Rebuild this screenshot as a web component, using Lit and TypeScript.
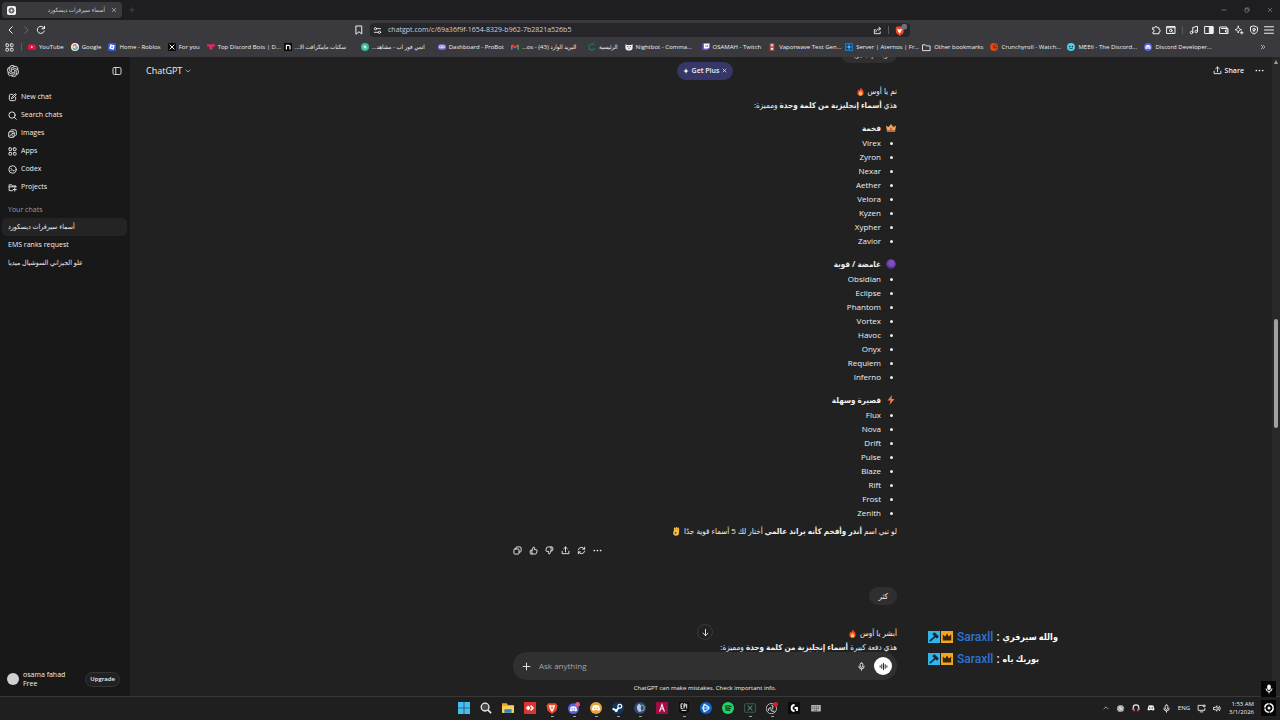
import { LitElement, html, css, svg, TemplateResult, SVGTemplateResult } from "lit";
import { customElement, state } from "lit/decorators.js";
import { classMap } from "lit/directives/class-map.js";

/* Line icons share a 20 by 20 grid and take the text colour. */
const glyphs: Record<string, SVGTemplateResult> = {
  back: svg`<path d="M12.5 3.500 6 10l6.500 6.500" />`,
  forward: svg`<path d="M7.500 3.500 14 10l-6.500 6.500" />`,
  reload: svg`<path d="M16.500 12.500A7.200 7.200 0 1 1 16 6" /><path d="M17 2.500v5h-5" />`,
  bookmark: svg`<path d="M4.500 2h11v16L10 13.500 4.500 18z" />`,
  tune: svg`<circle cx="5.500" cy="6" r="2.500" /><path d="M8 6h9M3 14h9" /><circle cx="14.500" cy="14" r="2.500" />`,
  shareBox: svg`<path d="M5 8H3v9h13v-4M6.500 13c.5-5 4-7 10-7M13 2.500 17 6l-4 3.500" />`,
  puzzle: svg`<path d="M4 5.500h3.500a2.500 2.500 0 1 1 5 0H16v3.500a2.500 2.500 0 0 1 0 5v3.500H4V14a2.500 2.500 0 0 0 0-5z" />`,
  searchTab: svg`<path d="M2 3h16v14H2zM2 5.500h16" /><circle cx="9.500" cy="11" r="2.500" /><path d="m11.500 13 2 2" />`,
  music: svg`<path d="M7.500 15V5l9.500-2.500v10" /><circle cx="5" cy="15" r="2.500" /><circle cx="14.500" cy="13" r="2.500" />`,
  sidePanel: svg`<path d="M2 3h16v14H2z" /><path fill="currentColor" d="M11.500 3H18v14h-6.500z" />`,
  wallet: svg`<path d="M2 4h13.500v3H18v10H2zM15.500 7H5M17.500 10H13v4h4.500" />`,
  sparkle: svg`<path d="M8.500 2.500c.7 4.500 2 6 6.500 6.800-4.500.8-5.800 2.200-6.500 6.700C7.700 11.500 6.500 10.100 2 9.300c4.500-.8 5.700-2.300 6.500-6.800zM15.500 13v5M13 15.500h5" />`,
  star: svg`<path fill="currentColor" stroke="none" d="M10 0c1 6.500 3.500 9 10 10-6.500 1-9 3.500-10 10-1-6.500-3.500-9-10-10 6.500-1 9-3.500 10-10z" />`,
  shield: svg`<path d="M10 2 17 4.500V10c0 4-3 6.500-7 8-4-1.500-7-4-7-8V4.500z" /><circle cx="10" cy="9" r="2.500" /><path d="M10 11v3" />`,
  menu: svg`<path d="M1 3.500h18M1 10h18M1 16.500h18" />`,
  grid: svg`<rect x="2" y="2" width="6" height="6" rx="1.500" /><rect x="12" y="2" width="6" height="6" rx="1.500" /><rect x="2" y="12" width="6" height="6" rx="1.500" /><rect x="12" y="12" width="6" height="6" rx="1.500" />`,
  folder: svg`<path d="M2 4h5.500l2 2.500H18V17H2z" />`,
  more: svg`<path d="m4 4 6 6-6 6M10.500 4l6 6-6 6" />`,
  close: svg`<path d="m4 4 12 12M16 4 4 16" />`,
  plus: svg`<path d="M10 2.500v15M2.500 10h15" />`,
  minus: svg`<path d="M3 10h14" />`,
  restore: svg`<rect x="3" y="6" width="11" height="11" rx="2" /><path d="M7 3h8a2 2 0 0 1 2 2v8" />`,
  logo: svg`<path transform="scale(.833)" fill="currentColor" stroke="currentColor" stroke-width=".5" d="M22.2819 9.8211a5.9847 5.9847 0 0 0-.5157-4.9108 6.0462 6.0462 0 0 0-6.5098-2.9A6.0651 6.0651 0 0 0 4.9807 4.1818a5.9847 5.9847 0 0 0-3.9977 2.9 6.0462 6.0462 0 0 0 .7427 7.0966 5.98 5.98 0 0 0 .511 4.9107 6.051 6.051 0 0 0 6.5146 2.9001A5.9847 5.9847 0 0 0 13.2599 24a6.0557 6.0557 0 0 0 5.7718-4.2058 5.9894 5.9894 0 0 0 3.9977-2.9001 6.0557 6.0557 0 0 0-.7475-7.0729zm-9.022 12.6081a4.4755 4.4755 0 0 1-2.8764-1.0408l.1419-.0804 4.7783-2.7582a.7948.7948 0 0 0 .3927-.6813v-6.7369l2.02 1.1686a.071.071 0 0 1 .038.052v5.5826a4.504 4.504 0 0 1-4.4945 4.4944zm-9.6607-4.1254a4.4708 4.4708 0 0 1-.5346-3.0137l.142.0852 4.783 2.7582a.7712.7712 0 0 0 .7806 0l5.8428-3.3685v2.3324a.0804.0804 0 0 1-.0332.0615L9.74 19.9502a4.4992 4.4992 0 0 1-6.1408-1.6464zM2.3408 7.8956a4.485 4.485 0 0 1 2.3655-1.9728V11.6a.7664.7664 0 0 0 .3879.6765l5.8144 3.3543-2.0201 1.1685a.0757.0757 0 0 1-.071 0l-4.8303-2.7865A4.504 4.504 0 0 1 2.3408 7.872zm16.5963 3.8558L13.1038 8.364 15.1192 7.2a.0757.0757 0 0 1 .071 0l4.8303 2.7913a4.4944 4.4944 0 0 1-.6765 8.1042v-5.6772a.79.79 0 0 0-.407-.667zm2.0107-3.0231l-.142-.0852-4.7735-2.7818a.7759.7759 0 0 0-.7854 0L9.409 9.2297V6.8974a.0662.0662 0 0 1 .0284-.0615l4.8303-2.7866a4.4992 4.4992 0 0 1 6.6802 4.66zM8.3065 12.863l-2.02-1.1638a.0804.0804 0 0 1-.038-.0567V6.0742a4.4992 4.4992 0 0 1 7.3757-3.4537l-.142.0805L8.704 5.459a.7948.7948 0 0 0-.3927.6813zm1.0976-2.3654l2.602-1.4998 2.6069 1.4998v2.9994l-2.5974 1.4997-2.6067-1.4997Z" />`,
  panel: svg`<rect x="2" y="3" width="16" height="14" rx="2.500" /><path d="M7.500 3v14" />`,
  chevron: svg`<path d="m3 7 7 6 7-6" />`,
  chevronUp: svg`<path d="m3 13 7-7 7 7" />`,
  compose: svg`<path d="M10.500 3H6a3 3 0 0 0-3 3v8a3 3 0 0 0 3 3h8a3 3 0 0 0 3-3V9.500" /><path d="m8 12 .5-2.800L15.500 2.300a1.500 1.500 0 0 1 2.200 2.200l-7 7z" />`,
  search: svg`<circle cx="9" cy="9" r="7" /><path d="m14 14 4.500 4.500" />`,
  images: svg`<rect x="1.500" y="6" width="12.500" height="12.500" rx="2.500" /><path d="M6 3 7 2h8.500a3 3 0 0 1 3 3v8L17 14.500M3 16l4-4 5 5" /><circle cx="10" cy="10" r="1" />`,
  codex: svg`<circle cx="10" cy="10" r="8.200" /><path d="m6.500 7.500 2 2.500-2 2.500M11 12.500h3" />`,
  projects: svg`<path d="M17.500 9V6.500h-8L8 4H2.500v13H10M2.500 8.500h15M15 11v7M11.500 14.500h7" />`,
  upload: svg`<path d="M10 13V2.500M6 6l4-3.800L14 6M2.500 11.500V17h15v-5.500" />`,
  dots: svg`<g fill="currentColor" stroke="none"><circle cx="3" cy="10" r="1.900" /><circle cx="10" cy="10" r="1.900" /><circle cx="17" cy="10" r="1.900" /></g>`,
  copy: svg`<rect x="2" y="6.500" width="11.500" height="11.500" rx="2.500" /><path d="M6.500 6.500V4.500a2.500 2.500 0 0 1 2.500-2.500h6.500A2.500 2.500 0 0 1 18 4.500V11a2.500 2.500 0 0 1-2.500 2.500h-2" />`,
  like: svg`<path d="M6.500 9 10 2.200c2 0 2.800 1.300 2.400 3L11.800 8h4.200c1.500 0 2.300 1.200 2 2.500l-1.300 5.300A2.500 2.500 0 0 1 14.300 17.800H4.500A1.800 1.800 0 0 1 2.700 16v-5.200A1.800 1.800 0 0 1 4.500 9zM6.500 9v8.800" />`,
  regenerate: svg`<path d="M3 8.500A7.200 7.200 0 0 1 16.500 7M17 2.500V7h-4.500M17 11.500A7.200 7.200 0 0 1 3.500 13M3 17.500V13h4.500" />`,
  down: svg`<path d="M10 3v14M4.500 11.500 10 17l5.500-5.500" />`,
  mic: svg`<rect x="7" y="2" width="6" height="10" rx="3" /><path d="M4 9.500a6 6 0 0 0 12 0M10 15.500v3" />`,
  wave: svg`<path d="M2.500 8.500v3M6.200 6v8M10 3v14M13.800 6v8M17.500 8.500v3" />`,
  monitor: svg`<path d="M12 3H2.500v11h15V10M7 17.500h6M14.500 2.500h3.500v3.500h-3.500z" />`,
  speaker: svg`<path d="M2 7.500h3L9 4v12l-4-3.500H2zM12 7.500a4 4 0 0 1 0 5M14.500 5a8 8 0 0 1 0 10" />`,
};

const icon = (name: string, size = "s9", extra = "") =>
  html`<svg class="ic ${size} ${extra}" viewBox="0 0 20 20" aria-hidden="true">${glyphs[name]}</svg>`;

/* Filled pictures: site icons, application icons and emoji. */
const pictures: Record<string, SVGTemplateResult> = {
  youtube: svg`<rect y="3" width="20" height="14" rx="4" fill="#e8123c" /><path d="M8 7v6l5-3z" fill="#fff" />`,
  google: svg`<circle cx="10" cy="10" r="10" fill="#eee" /><g fill="none" stroke-width="3"><path d="M14 6a5.500 5.500 0 0 0-8.500 1.200" stroke="#e64235" /><path d="M5.500 7.200a5.500 5.500 0 0 0 0 5.600" stroke="#f8ba05" /><path d="M5.500 12.800a5.500 5.500 0 0 0 8.500 1.500" stroke="#34a553" /><path d="M14 14.300a5.500 5.500 0 0 0 1.500-4.300H10" stroke="#4286f5" /></g>`,
  roblox: svg`<rect width="20" height="20" rx="4" fill="#3457e6" /><path fill="#fff" fill-rule="evenodd" d="m6 3 11 3-3 11L3 14zm2.500 5-.8 3.500 3.800 1 .9-3.700z" />`,
  x: svg`<rect width="20" height="20" rx="2" fill="#0a0a0a" /><path d="m4 4 12 12M16 4 4 16" stroke="#eee" stroke-width="2.500" />`,
  topgg: svg`<path d="M0 3h20v6h-6v4l-4 5-4-5V9H0z" fill="#e5295f" />`,
  nfont: svg`<rect width="20" height="20" fill="#070707" /><path d="M6 16V6h6q3 0 3 3v7" fill="none" stroke="#fff" stroke-width="3" />`,
  teal: svg`<circle cx="10" cy="10" r="10" fill="#35bd9d" /><path d="M5 10h10M10 5v10M7 7l6 6" stroke="#eafff9" stroke-width="2" />`,
  probot: svg`<rect y="3" width="20" height="14" rx="6" fill="#7d73d8" /><rect x="3" y="6" width="14" height="7" rx="3" fill="#e7e5ff" /><circle cx="7" cy="9.500" r="1.500" fill="#4438a0" /><circle cx="13" cy="9.500" r="1.500" fill="#4438a0" />`,
  gmail: svg`<path d="M2 17V5" stroke="#4285f4" stroke-width="4" /><path d="M18 17V5" stroke="#34a853" stroke-width="4" /><path d="m2 5 8 6 8-6" fill="none" stroke="#ea4335" stroke-width="4" />`,
  ring: svg`<path d="M15 4.500A7.500 7.500 0 1 0 17 12" fill="none" stroke="#117b70" stroke-width="3" />`,
  nightbot: svg`<path d="M1 3l4 2h10l4-2v9a9 7 0 0 1-18 0z" fill="#f1f1f1" /><path d="M5 9h3M12 9h3M8 13h4" stroke="#444" stroke-width="2" />`,
  twitch: svg`<path d="M3 0h17v12l-5 5h-4l-3 3v-3H1V4z" fill="#9248f2" /><path d="M5 2h13v9l-3 3H5z" fill="#fff" /><path d="M10 5v5M14 5v5" stroke="#9248f2" stroke-width="2" />`,
  vapor: svg`<rect x="4" width="12" height="20" rx="2" fill="#a94a3a" /><path d="M7 3h6v5H7z" fill="#e8d8c8" /><path d="M7 12h6v5H7z" fill="#eee" />`,
  aternos: svg`<rect width="20" height="20" fill="#1a79bd" /><path d="M3 3h5v5H3zM12 3h5v5h-5zM3 12h5v5H3zM12 12h5v5h-5z" fill="#123e62" /><circle cx="10" cy="10" r="3" fill="#53b2ea" />`,
  crunchy: svg`<circle cx="10" cy="10" r="10" fill="#df4b12" /><circle cx="13" cy="9" r="5" fill="#3a2a28" /><circle cx="14" cy="8" r="3" fill="#df4b12" />`,
  mee6: svg`<circle cx="10" cy="10" r="10" fill="#4fd0e6" /><circle cx="6.500" cy="9" r="2" fill="#17404f" /><circle cx="13.500" cy="9" r="2" fill="#17404f" /><path d="M6 14h8" stroke="#17404f" stroke-width="2" />`,
  discord: svg`<circle cx="10" cy="10" r="10" fill="#5a5fe8" /><path d="M5 6q5-2 10 0l2 7-3 2-1.500-1.500h-5L6 15l-3-2z" fill="#fff" /><circle cx="7.800" cy="10.500" r="1.300" fill="#5a5fe8" /><circle cx="12.200" cy="10.500" r="1.300" fill="#5a5fe8" />`,
  discordGold: svg`<circle cx="10" cy="10" r="10" fill="#e6a541" /><path d="M5 6q5-2 10 0l2 7-3 2-1.500-1.500h-5L6 15l-3-2z" fill="#fff" /><circle cx="7.800" cy="10.500" r="1.300" fill="#e6a541" /><circle cx="12.200" cy="10.500" r="1.300" fill="#e6a541" />`,
  discordAlert: svg`<circle cx="9" cy="11" r="9" fill="#5a5fe8" /><path d="M4.500 8q4.500-2 9 0l2 6-3 2-1.500-1.500H7.500L6 16l-3-2z" fill="#fff" /><circle cx="7" cy="11.500" r="1.200" fill="#5a5fe8" /><circle cx="11" cy="11.500" r="1.200" fill="#5a5fe8" /><circle cx="16" cy="4" r="4" fill="#ec5a78" />`,
  favicon: svg`<rect width="20" height="20" rx="4" fill="#f2f2f2" /><circle cx="10" cy="10" r="5.500" fill="none" stroke="#333" stroke-width="2" /><path d="m7 8 3-1.500L13 8v4l-3 1.500L7 12z" fill="none" stroke="#333" stroke-width="1.500" />`,
  braveLion: svg`<path d="M4 2h12l3 4-1.500 8L10 20l-7.500-6L1 6z" fill="#f04a25" /><path d="m5 5 5 1 5-1-1 5-4 7-4-7z" fill="#fff" /><path d="m8 8 2 5 2-5z" fill="#f04a25" />`,
  braveBadge: svg`<path d="M3 4h9l3 3-1 8-6 5-6-5L1 7z" fill="#f04a25" /><path d="m4 8 4 1 4-1-2 4-2 4-3-3z" fill="#fff" /><rect x="11" width="9" height="9" rx="3" fill="#6e7080" />`,
  windows: svg`<path d="M0 0h9.500v9.500H0zM10.500 0H20v9.500h-9.500zM0 10.500h9.500V20H0zM10.500 10.500H20V20h-9.500z" fill="#45bff2" />`,
  find: svg`<circle cx="8.500" cy="8.500" r="6.500" fill="#4a4a4a" stroke="#eee" stroke-width="2.200" /><path d="m13.500 13.500 5 5" stroke="#eee" stroke-width="2.600" />`,
  files: svg`<path d="M0 2h8l2 3h10v13H0z" fill="#e9a82a" /><path d="M0 7h20v11H0z" fill="#fad25a" /><path d="M4 12h12v6H4z" fill="#2f84c8" />`,
  anydesk: svg`<rect width="20" height="20" rx="1" fill="#dc3434" /><path d="m3 10 4-4 4 4-4 4z" fill="#fff" /><path d="m11 6 4 4-4 4" fill="none" stroke="#fff" stroke-width="2.500" />`,
  steam: svg`<circle cx="10" cy="10" r="10" fill="#12365e" /><path d="m1 11 6 3 5-5" stroke="#fff" stroke-width="3" fill="none" /><circle cx="13" cy="7" r="3.200" fill="#12365e" stroke="#fff" stroke-width="2" /><circle cx="7" cy="14" r="2.500" fill="#fff" />`,
  blueOrb: svg`<circle cx="10" cy="10" r="10" fill="#2c4a70" /><path d="M8 3a5 5 0 0 1 3 8 4 4 0 0 1-1 6 8 8 0 0 1-2-14z" fill="#b9c7d8" /><path d="M12 5a5 5 0 0 1 0 10" stroke="#7e9abc" stroke-width="2" fill="none" />`,
  alight: svg`<rect width="20" height="20" rx="2" fill="#a60a44" /><path d="m6 16 4-12 4 12M9 12l3-1" fill="none" stroke="#fff" stroke-width="1.800" />`,
  epic: svg`<path d="M2 0h16v16l-8 4-8-4z" fill="#0b0b0b" /><path d="M5 3v8M5 3h3M5 7h2M5 11h3M10 11V3h2v4h-2M14.500 3v8M6 14h8" stroke="#fff" stroke-width="1.500" fill="none" />`,
  battle: svg`<circle cx="10" cy="10" r="10" fill="#0c64ce" /><path d="M7 4q8 4 8 6t-8 6q-3-6 0-12zM3 10h12" fill="none" stroke="#e3f3ff" stroke-width="2" />`,
  spotify: svg`<circle cx="10" cy="10" r="10" fill="#1fd760" /><path d="M4.500 7q6-2 11.500 1M5 10.300q5-1.500 9.500 1M6 13.500q4-1 7.500.8" fill="none" stroke="#123" stroke-width="1.900" />`,
  screenX: svg`<rect x="1" y="3" width="18" height="14" rx="1" fill="#16211f" stroke="#47635d" stroke-width="1.500" /><path d="m6 6 8 8M14 6l-8 8" stroke="#567a72" stroke-width="2" />`,
  obs: svg`<circle cx="9" cy="11" r="8.500" fill="#1c1c1e" stroke="#c9c9c9" stroke-width="1.500" /><path d="M9 5a4 4 0 0 1 1 7M4 15a4 4 0 0 1 5-5M14 15a4 4 0 0 1-6-3" fill="none" stroke="#c9c9c9" stroke-width="2" /><circle cx="16" cy="4" r="4" fill="#e01b24" />`,
  logitech: svg`<rect width="20" height="20" fill="#0b0b0b" /><path d="M11 5a5 5 0 1 0 0 10M11 10h4v5" fill="none" stroke="#fff" stroke-width="3" />`,
  keyboard: svg`<rect x="2" y="5" width="16" height="11" rx="1" fill="#b5b5b5" /><path d="M4 8h12M4 11h12M7 14h6" stroke="#333" stroke-width="1.300" stroke-dasharray="2 1" />`,
  pinwheel: svg`<circle cx="10" cy="10" r="8" fill="#9a9a9a" /><path d="M4 13 13 4M7 16l9-9M6 5l9 10" stroke="#f0f0f0" stroke-width="2" />`,
  headset: svg`<path d="M3 15V9a7 7 0 0 1 14 0v6" fill="none" stroke="#eee" stroke-width="3" /><path d="M3 11h4v7H3zM13 11h4v7h-4z" fill="#e25163" />`,
  padWhite: svg`<path d="M4 4q6-2 12 0l3 10-4 3-2-2H7l-2 2-4-3z" fill="#eee" /><circle cx="7" cy="10" r="1.700" fill="#333" /><circle cx="13" cy="10" r="1.700" fill="#333" />`,
  record: svg`<circle cx="10" cy="10" r="7" fill="none" stroke="#fff" stroke-width="2.500" stroke-dasharray="9.500 1.500" /><circle cx="10" cy="10" r="2.500" fill="#fff" />`,
  micSolid: svg`<rect x="6.500" y="1" width="7" height="11" rx="3.500" fill="#fff" /><path d="M4 9a6 6 0 0 0 12 0M10 15v4" fill="none" stroke="#fff" stroke-width="2" />`,
  fire: svg`<path d="M10 0c1 4 7 6 7 13a7 7 0 0 1-14 0c0-4 2-5 3-8l2 3c2-2 2-5 2-8z" fill="#e8552b" /><path d="M10 9c1 2 4 3 4 6a4 4 0 0 1-8 0c0-3 3-3 4-6z" fill="#fdc35a" />`,
  crown: svg`<path d="M0 5l5 3 5-6 5 6 5-3-2 13H2z" fill="#eaa052" /><path d="M2 14h16l-.5 4h-15z" fill="#c26a45" /><circle cx="10" cy="12" r="2" fill="#d0465a" /><circle cx="5" cy="12" r="1.300" fill="#e0c080" /><circle cx="15" cy="12" r="1.300" fill="#e0c080" />`,
  purple: svg`<circle cx="10" cy="10" r="9.500" fill="#6a3ea8" /><circle cx="11" cy="8" r="6" fill="#7f50bb" /><path d="M1 11a9 9 0 0 0 15 5A12 12 0 0 1 1 11z" fill="#4a2a80" />`,
  bolt: svg`<path d="M12 0 3 11h6l-2 9L17 8h-6z" fill="#ee7b4c" />`,
  ok: svg`<circle cx="9" cy="13" r="6.500" fill="#f8c04a" /><circle cx="8" cy="13" r="2.300" fill="#8a5a1a" /><path d="M6 8V3M10 8V2M14 10V3" stroke="#f8c04a" stroke-width="3.600" stroke-linecap="round" />`,
  modTag: svg`<rect width="20" height="20" fill="#2fb5ea" /><path d="M3 17 12 9" stroke="#10293a" stroke-width="3" /><path d="m7 5 4-3 7 7-3 4z" fill="#10293a" />`,
  kingTag: svg`<rect width="20" height="20" fill="#f2a81c" /><path d="m3 6 4 3 3-5 3 5 4-3v6H3zM3 12h14v4H3z" fill="#3a2606" />`,
};

const pic = (name: string, size = "s9", label = "") =>
  label
    ? html`<svg class="pic ${size}" viewBox="0 0 20 20" role="img" aria-label=${label}>${pictures[name]}</svg>`
    : html`<svg class="pic ${size}" viewBox="0 0 20 20" aria-hidden="true">${pictures[name]}</svg>`;

interface Bookmark { icon: string; text: string; long?: boolean; line?: boolean }

const bookmarks: Bookmark[] = [
  { icon: "youtube", text: "YouTube" },
  { icon: "google", text: "Google" },
  { icon: "roblox", text: "Home - Roblox" },
  { icon: "x", text: "For you" },
  { icon: "topgg", text: "Top Discord Bots | D...", long: true },
  { icon: "nfont", text: "سكنات ماينكرافت الا...", long: true },
  { icon: "teal", text: "اتمي فور اب - مشاهد...", long: true },
  { icon: "probot", text: "Dashboard - ProBot" },
  { icon: "gmail", text: "البريد الوارد (43) - os...", long: true },
  { icon: "ring", text: "الرئيسية" },
  { icon: "nightbot", text: "Nightbot - Comma...", long: true },
  { icon: "twitch", text: "OSAMAH - Twitch" },
  { icon: "vapor", text: "Vaporwave Text Gen...", long: true },
  { icon: "aternos", text: "Server | Aternos | Fr...", long: true },
  { icon: "folder", text: "Other bookmarks", line: true },
  { icon: "crunchy", text: "Crunchyroll - Watch...", long: true },
  { icon: "mee6", text: "MEE6 - The Discord...", long: true },
  { icon: "discord", text: "Discord Developer...", long: true },
];

const navItems = [
  ["compose", "New chat"],
  ["search", "Search chats"],
  ["images", "Images"],
  ["grid", "Apps"],
  ["codex", "Codex"],
  ["projects", "Projects"],
];

const chats = ["أسماء سيرفرات ديسكورد", "EMS ranks request", "علو الجيزاني السوشيال ميديا"];

const groups = [
  { icon: "crown", label: "👑", title: "فخمة", names: ["Virex", "Zyron", "Nexar", "Aether", "Velora", "Kyzen", "Xypher", "Zavior"] },
  { icon: "purple", label: "🟣", title: "غامضة / قوية", names: ["Obsidian", "Eclipse", "Phantom", "Vortex", "Havoc", "Onyx", "Requiem", "Inferno"] },
  { icon: "bolt", label: "⚡", title: "قصيرة وسهلة", names: ["Flux", "Nova", "Drift", "Pulse", "Blaze", "Rift", "Frost", "Zenith"] },
];

const taskApps: [string, string, boolean][] = [
  ["windows", "Start", false],
  ["find", "Search", false],
  ["files", "File Explorer", false],
  ["anydesk", "AnyDesk", false],
  ["braveLion", "Brave", true],
  ["discordAlert", "Discord", true],
  ["discordGold", "Discord Canary", true],
  ["steam", "Steam", true],
  ["blueOrb", "Launcher", true],
  ["alight", "Alight", false],
  ["epic", "Epic Games", true],
  ["battle", "Battle.net", false],
  ["spotify", "Spotify", false],
  ["screenX", "Display", true],
  ["obs", "OBS Studio", true],
  ["logitech", "Logitech G HUB", false],
  ["keyboard", "Keyboard", false],
];

@customElement("app-root")
export class AppRoot extends LitElement {
  @state() private openChat = 0;

  static styles = css`
    :host {
      display: flex;
      flex-direction: column;
      height: 100vh;
      overflow: hidden;
      position: relative;
      background: #212121;
      color: #f0f0f0;
      font: 500 7px/14px "Open Sans", "DejaVu Sans Condensed", "DejaVu Sans", sans-serif;
    }
    * { box-sizing: border-box; }
    button, a, input {
      font: inherit;
      color: inherit;
      text-decoration: none;
      background: none;
      border: 0;
      padding: 0;
      margin: 0;
      outline: 0;
    }
    button { display: inline-flex; align-items: center; justify-content: center; }
    ul, p, h1, h2, h3 { margin: 0; padding: 0; font: inherit; list-style: none; }
    svg { display: block; flex: none; }
    .ic { fill: none; stroke: currentColor; stroke-width: 2; stroke-linecap: round; stroke-linejoin: round; }
    .s5 { width: 5px; height: 5px; stroke-width: 3; }
    .s6 { width: 6px; height: 6px; }
    .s8 { width: 8px; height: 8px; }
    .s9 { width: 9px; height: 9px; }
    .s10 { width: 10px; height: 10px; }
    .s12 { width: 12px; height: 12px; }
    .flip { transform: rotate(180deg); }
    .dim { color: #6c6b70; }
    .rule { width: 1px; height: 8px; background: #5a595e; }

    /* browser */
    .tabs { display: flex; align-items: center; height: 20px; background: #1e1d22; padding: 0 6px 0 2px; color: #98979c; }
    .tab { display: flex; align-items: center; gap: 6px; width: 120px; height: 16px; padding: 0 5px; border-radius: 4px; background: #3a393d; color: #d0d0d2; }
    .tab-title { flex: 1; direction: rtl; white-space: nowrap; font-size: 6px; }
    .new-tab { margin-left: 7px; color: #5c5b60; }
    .window { display: flex; gap: 14px; margin-left: auto; }
    .window button { width: 9px; height: 12px; }
    .toolbar { background: #3a393d; }
    .bar { display: grid; grid-template-columns: 1fr minmax(0, 540px) 1fr; align-items: center; height: 20px; }
    .bar-side { display: flex; align-items: center; gap: 5px; padding: 0 6px; }
    .bar-side .rule { margin: 0 1px; }
    .push { margin-left: auto; }
    .address { display: flex; align-items: center; gap: 6px; height: 14px; padding: 0 3px; border-radius: 4px; background: #27262b; }
    .url { flex: 1; min-width: 0; color: #cfcfd2; }
    .marks { display: flex; align-items: center; height: 17px; padding: 0 14px 3px 5px; white-space: nowrap; font-size: 6px; }
    .marks .rule { margin: 0 6px 0 7px; }
    .mark { display: flex; align-items: center; gap: 3px; padding-right: 7px; flex: none; }
    .mark-long { width: 77px; padding: 0; }

    /* page */
    .page { display: flex; flex: 1; min-height: 0; }
    .side { display: flex; flex-direction: column; width: 130px; flex: none; padding: 4px 3px 8px 2px; background: #181818; }
    .side-head { display: flex; justify-content: space-between; align-items: center; height: 19px; padding: 0 5px; color: #d0d0d0; }
    .nav { padding-top: 8px; }
    .row { display: flex; align-items: center; gap: 4px; height: 18px; width: 100%; padding: 0 6px; border-radius: 5px; }
    .row-on { background: #242424; }
    .caption { padding: 7px 6px 1px; color: #9c9c9c; }
    .profile { display: flex; align-items: center; gap: 4px; margin-top: auto; padding: 0 7px 0 5px; line-height: 9px; }
    .avatar { width: 12px; height: 12px; border-radius: 50%; background: #cfd0d2; }
    .pill { margin-left: auto; height: 15px; padding: 0 4px; border: 1px solid #353535; border-radius: 8px; background: #212121; font-weight: 600; font-size: 6px; }

    .main { position: relative; display: flex; flex-direction: column; flex: 1; min-width: 0; }
    .head { position: absolute; inset: 0 0 auto 0; display: grid; grid-template-columns: 1fr auto 1fr; align-items: center; height: 27px; padding: 0 16px; }
    .model { justify-self: start; gap: 3px; font-size: 9px; }
    .plus { gap: 3px; height: 18px; padding: 0 6px; border-radius: 9px; background: #373669; font-weight: 600; }
    .tools { display: flex; gap: 11px; justify-content: flex-end; }
    .share { gap: 3px; font-weight: 600; }

    .thread { display: flex; flex-direction: column; justify-content: flex-end; flex: 1; min-height: 0; overflow: hidden; width: 384px; max-width: 100%; align-self: center; font-size: 8px; }
    .said { align-self: flex-end; flex: none; height: 18px; padding: 0 9px; border-radius: 9px; background: #2f2f2f; line-height: 18px; margin-bottom: 21px; }
    .reply { flex: none; direction: rtl; }
    .line { display: flex; align-items: center; gap: 3px; height: 14px; white-space: nowrap; }
    strong { font-weight: 700; }
    .title { display: flex; align-items: center; gap: 5px; height: 16px; margin-top: 8px; padding-right: 1px; font-weight: 700; }
    .names li { display: flex; align-items: center; gap: 9px; padding-right: 4px; }
    .names li::before { content: ""; width: 3px; height: 3px; border-radius: 50%; background: #ececec; }
    .closing { margin-top: 4px; }
    .acts { display: flex; gap: 7px; flex: none; height: 16px; margin: 4px 0 29px; align-items: center; }
    .jump { position: absolute; left: 50%; bottom: 56px; width: 16px; height: 16px; margin-left: -8px; border: 1px solid #3b3b3b; border-radius: 50%; background: #212121; }

    .ask { position: relative; display: flex; align-items: center; align-self: center; gap: 8px; width: 384px; max-width: 100%; height: 28px; margin-top: -2px; padding: 0 5px 0 9px; border-radius: 14px; background: #303030; font-size: 8px; }
    .ask input { flex: 1; min-width: 0; }
    .ask input::placeholder { color: #a5a5a5; opacity: 1; }
    .voice { width: 18px; height: 18px; border-radius: 50%; background: #fff; color: #111; }
    .note { height: 16px; line-height: 16px; text-align: center; font-size: 6px; }
    .scroll { position: absolute; inset: 0 0 0 auto; width: 8px; background: #282828; }
    .thumb { position: absolute; top: 41%; left: 2px; width: 4px; height: 17%; border-radius: 2px; background: #a0a0a0; }
    .tip { position: absolute; top: 3px; left: 2px; border: 2px solid transparent; border-top: 0; border-bottom: 4px solid #a0a0a0; }

    /* stream chat laid over the page */
    .stream { position: absolute; left: 928px; bottom: 50px; font: 500 12px/22px Roboto, "DejaVu Sans Condensed", "DejaVu Sans", sans-serif; }
    .stream li { display: flex; align-items: center; gap: 1px; }
    .who { color: #2c74d8; margin: 0 2px 0 3px; }
    .says { margin-left: 2px; font-size: 9px; font-weight: 700; color: #fff; }

    /* taskbar */
    .task { display: grid; grid-template-columns: 1fr auto 1fr; align-items: center; height: 24px; flex: none; padding-bottom: 1px; border-top: 1px solid #383838; background: #1f1f20; }
    .apps { display: flex; grid-column: 2; }
    .app { position: relative; width: 22px; height: 22px; }
    .app-on::after { content: ""; position: absolute; bottom: 2px; left: 10px; width: 3px; height: 1px; background: #a0a0a0; }
    .tray { display: flex; align-items: center; justify-content: flex-end; gap: 7px; padding-right: 4px; font-size: 6px; }
    .clock { text-align: right; line-height: 8px; }
    .badge { display: flex; align-items: center; justify-content: center; width: 15px; height: 16px; background: #060606; }
    .float { position: absolute; right: 4px; bottom: 23px; }
  `;

  private btn(name: string, label: string, size = "s9", extra = "") {
    return html`<button type="button" class=${extra} aria-label=${label}>${icon(name, size)}</button>`;
  }

  private browser(): TemplateResult {
    return html`
      <div class="tabs">
        <div class="tab">
          ${pic("favicon", "s9")}
          <span class="tab-title">أسماء سيرفرات ديسكورد</span>
          ${this.btn("close", "Close tab", "s6")}
        </div>
        ${this.btn("plus", "New tab", "s6", "new-tab")}
        <div class="window">
          ${this.btn("minus", "Minimize", "s6")}${this.btn("restore", "Restore", "s6")}${this.btn("close", "Close", "s6")}
        </div>
      </div>
      <div class="toolbar">
        <div class="bar">
          <div class="bar-side">
            ${this.btn("back", "Back", "s10")}${this.btn("forward", "Forward", "s10", "dim")}${this.btn("reload", "Reload", "s10")}
            ${this.btn("bookmark", "Bookmark", "s10", "push")}
          </div>
          <div class="address">
            ${icon("tune", "s9")}
            <input class="url" aria-label="Address" value="chatgpt.com/c/69a36f9f-1654-8329-b962-7b2821a526b5" />
            ${this.btn("shareBox", "Share page")}<span class="rule"></span>
            <button aria-label="Shields">${pic("braveBadge", "s12")}</button>
          </div>
          <div class="bar-side">
            <span class="push"></span>
            ${this.btn("puzzle", "Extensions", "s10")}${this.btn("searchTab", "Search tabs", "s10")}<span class="rule"></span>
            ${this.btn("music", "Playlist", "s10")}${this.btn("sidePanel", "Side panel", "s10")}${this.btn("wallet", "Wallet", "s10")}
            ${this.btn("sparkle", "Leo", "s10")}${this.btn("shield", "VPN", "s10")}${this.btn("menu", "Menu", "s10")}
          </div>
        </div>
        <nav class="marks" aria-label="Bookmarks">
          ${icon("grid", "s9")}<span class="rule"></span>
          ${bookmarks.map(
            (b) => html`<a href="#" class=${classMap({ mark: true, "mark-long": !!b.long })}>
              ${b.line ? icon(b.icon, "s9") : pic(b.icon, "s8")}<span dir="auto">${b.text}</span>
            </a>`
          )}
          <button class="push" aria-label="More bookmarks">${icon("more", "s6")}</button>
        </nav>
      </div>
    `;
  }

  private sidebar(): TemplateResult {
    return html`<aside class="side">
      <div class="side-head">${icon("logo", "s12")}${this.btn("panel", "Toggle sidebar", "s10")}</div>
      <nav class="nav">
        ${navItems.map(([i, t]) => html`<a href="#" class="row">${icon(i, "s9")}${t}</a>`)}
      </nav>
      <h2 class="caption">Your chats</h2>
      ${chats.map(
        (c, i) => html`<a
          href="#"
          class=${classMap({ row: true, "row-on": i === this.openChat })}
          @click=${() => (this.openChat = i)}
          ><span dir="auto">${c}</span></a
        >`
      )}
      <div class="profile">
        <span class="avatar"></span>
        <div>osama fahad<br />Free</div>
        <button class="pill">Upgrade</button>
      </div>
    </aside>`;
  }

  private conversation(): TemplateResult {
    return html`<main class="main">
      <div class="thread">
        <div class="said" dir="rtl">وبعد إنجليزية</div>
        <article class="reply">
          <p class="line"><span>تم يا أوس</span>${pic("fire", "s9", "🔥")}</p>
          <p class="line"><span>هذي <strong>أسماء إنجليزية من كلمة وحدة</strong> ومميزة:</span></p>
          ${groups.map(
            (g) => html`<h3 class="title">${pic(g.icon, "s10", g.label)}<span>${g.title}</span></h3>
              <ul class="names">${g.names.map((n) => html`<li>${n}</li>`)}</ul>`
          )}
          <p class="line closing">
            <span>لو تبي اسم <strong>أندر وأفخم كأنه براند عالمي</strong> أختار لك 5 أسماء قوية جدًا</span>${pic("ok", "s9", "👌")}
          </p>
        </article>
        <div class="acts">
          ${this.btn("copy", "Copy")}${this.btn("like", "Good response")}
          <button aria-label="Bad response">${icon("like", "s9", "flip")}</button>
          ${this.btn("upload", "Share")}${this.btn("regenerate", "Try again")}${this.btn("dots", "More")}
        </div>
        <div class="said" dir="rtl">كثر</div>
        <article class="reply">
          <p class="line"><span>أبشر يا أوس</span>${pic("fire", "s9", "🔥")}</p>
          <p class="line"><span>هذي دفعة كبيرة <strong>أسماء إنجليزية من كلمة وحدة</strong> ومميزة:</span></p>
        </article>
      </div>
      <form class="ask" @submit=${(e: Event) => e.preventDefault()}>
        ${this.btn("plus", "Add files")}
        <input aria-label="Message" placeholder="Ask anything" />
        ${this.btn("mic", "Dictate")}
        <button class="voice" type="button" aria-label="Voice mode">${icon("wave", "s9")}</button>
      </form>
      <p class="note">ChatGPT can make mistakes. Check important info.</p>
      ${this.btn("down", "Scroll to bottom", "s9", "jump")}
      <header class="head">
        <button class="model">ChatGPT ${icon("chevron", "s6")}</button>
        <button class="plus">${icon("star", "s6")}Get Plus${icon("close", "s5")}</button>
        <div class="tools">
          <button class="share">${icon("upload", "s9")}Share</button>
          ${this.btn("dots", "Options")}
        </div>
      </header>
      <div class="scroll"><span class="tip"></span><span class="thumb"></span></div>
    </main>`;
  }

  private taskbar(): TemplateResult {
    return html`<footer class="task">
      <div class="apps">
        ${taskApps.map(
          ([i, label, on]) => html`<button class=${classMap({ app: true, "app-on": on })} aria-label=${label}>
            ${pic(i, "s12")}
          </button>`
        )}
      </div>
      <div class="tray">
        ${icon("chevronUp", "s6")}${pic("pinwheel", "s9")}${pic("headset", "s8")}${pic("padWhite", "s8")}${icon("mic", "s9")}
        <span>ENG</span>${icon("monitor", "s9")}${icon("speaker", "s9")}
        <div class="clock">1:53 AM<br />3/1/2026</div>
        <span class="badge">${pic("record", "s12")}</span>
      </div>
    </footer>`;
  }

  render() {
    return html`
      ${this.browser()}
      <div class="page">${this.sidebar()}${this.conversation()}</div>
      ${this.taskbar()}
      <ul class="stream">
        ${["والله سيرفري", "بوريك ياه"].map(
          (m) => html`<li>
            ${pic("modTag", "s12")}${pic("kingTag", "s12")}<span class="who">Saraxll</span>:<span class="says" dir="rtl">${m}</span>
          </li>`
        )}
      </ul>
      <span class="badge float">${pic("micSolid", "s10")}</span>
    `;
  }
}
